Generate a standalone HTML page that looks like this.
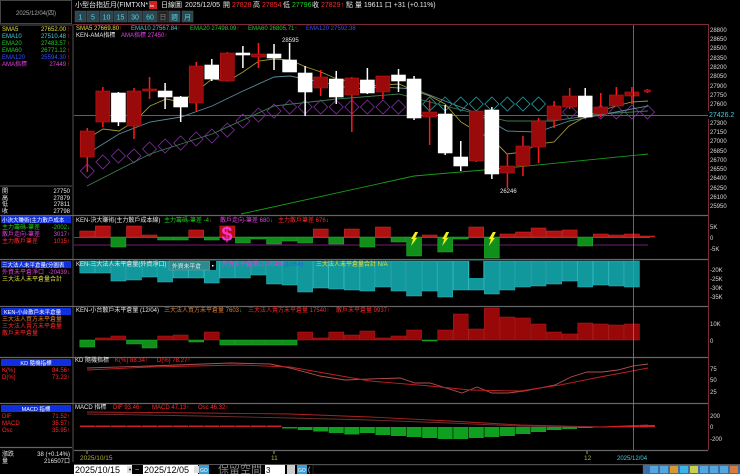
<!DOCTYPE html>
<html><head><meta charset="utf-8">
<style>
html,body{margin:0;padding:0;background:#000;width:740px;height:474px;overflow:hidden}
svg{display:block}
text{font-family:"Liberation Sans","Noto Sans CJK TC",sans-serif;font-size:6px}
.w{fill:#e8e8e8}.r{fill:#ff2a2a}.g{fill:#22cc22}.y{fill:#e0e040}.c{fill:#40d0e0}.m{fill:#e040e0}.b{fill:#3050ff}.ax{fill:#d8d8d8;font-size:6.5px}
.t{font-size:5.8px}
</style></head><body>
<svg id="s" width="740" height="474" viewBox="0 0 740 474" xmlns="http://www.w3.org/2000/svg">
<rect width="740" height="474" fill="#000"/>
<rect x="0.5" y="0.5" width="71" height="23" fill="none" stroke="#444"/>
<text x="36" y="15" text-anchor="middle" fill="#aaa" style="font-size:6px">2025/12/04(四)</text>
<text x="75" y="7" class="w" style="font-size:7px">小型台指近月(FIMTXN*1)</text>
<rect x="149" y="1" width="8" height="8" fill="#d02020"/><text x="150" y="7" fill="#fff" style="font-size:4px">tw</text>
<text x="161" y="7" class="w" style="font-size:7px">日線圖</text>
<text x="185" y="7" class="w" style="font-size:7px">2025/12/05</text>
<text x="223" y="7" class="w" style="font-size:7px">開</text><text x="232" y="7" class="r" style="font-size:7px">27828</text>
<text x="253" y="7" class="w" style="font-size:7px">高</text><text x="262" y="7" class="r" style="font-size:7px">27854</text>
<text x="283" y="7" class="w" style="font-size:7px">低</text><text x="292" y="7" class="g" style="font-size:7px">27796</text>
<text x="312" y="7" class="w" style="font-size:7px">收</text><text x="321" y="7" class="r" style="font-size:7px">27829↑</text>
<text x="346" y="7" class="w" style="font-size:7px">點 量 19611 口 +31 (+0.11%)</text>
<g id="btns"></g>
<line x1="0" y1="25" x2="72" y2="25" stroke="#555"/>
<g class="t">
<text x="2" y="31" class="y">SMA5</text><text x="66" y="31" class="y" text-anchor="end">27652.00</text>
<text x="2" y="38" class="c">EMA10</text><text x="66" y="38" class="c" text-anchor="end">27510.48</text>
<text x="2" y="45" class="g">EMA20</text><text x="66" y="45" class="g" text-anchor="end">27483.57</text>
<text x="2" y="52" class="g">EMA60</text><text x="66" y="52" class="g" text-anchor="end">26771.12</text>
<text x="2" y="59" class="b">EMA120</text><text x="66" y="59" class="b" text-anchor="end">25594.30</text>
<text x="2" y="66" class="m">AMA指標</text><text x="66" y="66" class="m" text-anchor="end">27449</text>
<text x="67" y="31" class="r">↑</text><text x="67" y="38" class="r">↑</text><text x="67" y="45" class="r">↑</text><text x="67" y="52" class="r">↑</text><text x="67" y="59" class="r">↑</text><text x="67" y="66" class="r">↑</text>
</g>
<line x1="0" y1="186" x2="72" y2="186" stroke="#555"/>
<g class="t">
<text x="2" y="193" class="w">開</text><text x="70" y="193" class="w" text-anchor="end">27750</text>
<text x="2" y="200" class="w">高</text><text x="70" y="200" class="w" text-anchor="end">27879</text>
<text x="2" y="206" class="w">低</text><text x="70" y="206" class="w" text-anchor="end">27811</text>
<text x="2" y="213" class="w">收</text><text x="70" y="213" class="w" text-anchor="end">27798</text>
<rect x="1" y="216" width="70" height="7" fill="#1030e0"/><text x="2" y="222" fill="#fff" style="font-size:5.5px">小決大賺術(主力散戶成本</text>
<text x="2" y="229" class="g">主力籌碼-筆差</text><text x="70" y="229" class="g" text-anchor="end">-2002↓</text>
<text x="2" y="236" class="m">散戶走向-筆差</text><text x="70" y="236" class="m" text-anchor="end">3017↑</text>
<text x="2" y="243" class="r">主力散戶筆差</text><text x="70" y="243" class="r" text-anchor="end">1015↑</text>
<rect x="1" y="261" width="70" height="7" fill="#1030e0"/><text x="2" y="267" fill="#fff" style="font-size:5.5px">三大法人未平倉量(分圖表</text>
<text x="2" y="274" class="m">外資未平倉淨口</text><text x="70" y="274" class="m" text-anchor="end">-20439↓</text>
<text x="2" y="281" class="y">三大法人未平倉量合計</text>
<rect x="1" y="308" width="70" height="7" fill="#1030e0"/><text x="4" y="314" fill="#fff" style="font-size:5.5px">KEN-小台散戶未平倉量</text>
<text x="2" y="321" style="fill:#e08030">三大法人買方未平倉量</text>
<text x="2" y="328" class="r">三大法人賣方未平倉量</text>
<text x="2" y="335" class="r">散戶未平倉量</text>
<rect x="1" y="359" width="70" height="7" fill="#1030e0"/><text x="36" y="365" fill="#fff" text-anchor="middle" style="font-size:5.5px">KD 隨機指標</text>
<text x="2" y="372" class="r">K(%)</text><text x="70" y="372" class="r" text-anchor="end">84.56↑</text>
<text x="2" y="379" class="r">D(%)</text><text x="70" y="379" class="r" text-anchor="end">73.23↑</text>
<rect x="1" y="405" width="70" height="7" fill="#1030e0"/><text x="36" y="411" fill="#fff" text-anchor="middle" style="font-size:5.5px">MACD 指標</text>
<text x="2" y="418" class="r">DIF</text><text x="70" y="418" class="r" text-anchor="end">71.52↑</text>
<text x="2" y="425" class="r">MACD</text><text x="70" y="425" class="r" text-anchor="end">35.57↑</text>
<text x="2" y="432" class="r">Osc</text><text x="70" y="432" class="r" text-anchor="end">35.95↑</text>
<text x="2" y="456" class="w">漲跌</text><text x="70" y="456" class="w" text-anchor="end">38 (+0.14%)</text>
<text x="2" y="463" class="w">量</text><text x="70" y="463" class="w" text-anchor="end">216507口</text>
</g>
<line x1="73" y1="24" x2="73" y2="462" stroke="#555"/>
<line x1="74" y1="24.5" x2="708" y2="24.5" stroke="#7a2a3a"/>
<line x1="708.5" y1="24" x2="708.5" y2="450" stroke="#7a2a3a"/>
<g stroke="#666" stroke-width="1.3">
<line x1="0" y1="215.5" x2="708" y2="215.5"/><line x1="0" y1="259.5" x2="708" y2="259.5"/>
<line x1="0" y1="306.5" x2="708" y2="306.5"/><line x1="0" y1="357.5" x2="708" y2="357.5"/>
<line x1="0" y1="403.5" x2="708" y2="403.5"/><line x1="74" y1="450.5" x2="708" y2="450.5"/>
<line x1="0" y1="447.5" x2="72" y2="447.5"/>
</g>
<g id="plot"></g>
<g class="t">
<text x="76" y="30" class="y">SMA5 27669.80<tspan class="r">↑</tspan></text>
<text x="131" y="30" class="c">EMA10 27567.84<tspan class="r">↑</tspan></text>
<text x="190" y="30" class="g">EMA20 27498.09<tspan class="r">↑</tspan></text>
<text x="248" y="30" class="g">EMA60 26805.71<tspan class="r">↑</tspan></text>
<text x="306" y="30" class="b">EMA120 27592.38</text>
<text x="76" y="37" class="w">KEN-AMA指標</text>
<text x="121" y="37" class="m">AMA指標 27450<tspan class="r">↑</tspan></text>
</g>
<text x="282" y="42" class="w">28595</text>
<text x="500" y="193" class="w">26246</text>
<g class="ax">
<text x="710" y="32">28800</text><text x="710" y="41">28650</text><text x="710" y="50">28500</text><text x="710" y="60">28350</text><text x="710" y="69">28200</text><text x="710" y="78">28050</text><text x="710" y="88">27900</text><text x="710" y="97">27750</text><text x="710" y="106">27600</text><text x="710" y="125">27300</text><text x="710" y="134">27150</text><text x="710" y="143">27000</text><text x="710" y="153">26850</text><text x="710" y="162">26700</text><text x="710" y="171">26550</text><text x="710" y="180">26400</text><text x="710" y="190">26250</text><text x="710" y="199">26100</text><text x="710" y="208">25950</text>
<text x="710" y="229">5K</text><text x="710" y="240">0</text><text x="710" y="251">-5K</text>
<text x="710" y="272">-20K</text><text x="710" y="281">-25K</text><text x="710" y="290">-30K</text><text x="710" y="299">-35K</text>
<text x="710" y="326">10K</text><text x="710" y="343">0</text>
<text x="710" y="371">75</text><text x="710" y="382">50</text><text x="710" y="394">25</text>
<text x="710" y="418">200</text><text x="710" y="429">0</text><text x="710" y="441">-200</text>
</g>
<rect x="708" y="111" width="32" height="8" fill="#000"/>
<text x="709" y="117" class="c" style="font-size:7px">27426.2</text>
<g class="t">
<text x="76" y="222" class="w">KEN-決大賺術(主力散戶成本線)</text>
<text x="164" y="222" class="g">主力籌碼-筆差 -4<tspan class="r">↓</tspan></text>
<text x="220" y="222" class="m">散戶走向-筆差 680<tspan class="g">↓</tspan></text>
<text x="278" y="222" class="r">主力散戶筆差 676<tspan class="g">↓</tspan></text>
<text x="76" y="266" class="w">KEN-三大法人未平倉量(外資淨口)</text>
</g>
<rect x="169" y="261" width="41" height="9" fill="#2a8c90" stroke="#999" stroke-width="0.5"/>
<text x="172" y="268" class="w t">外資未平倉</text>
<rect x="210" y="261" width="6" height="9" fill="#000"/><rect x="212" y="265" width="1.5" height="1.5" fill="#fff"/>
<g class="t">
<text x="222" y="266" class="m">外資未平倉淨口 -20439</text>
<text x="284" y="266" class="b">(17/54)</text>
<text x="316" y="266" class="y">三大法人未平倉量合計 N/A</text>
<text x="76" y="312" class="w">KEN-小台散戶未平倉量 (12/04)</text>
<text x="164" y="312" style="fill:#e08030">三大法人買方未平倉量 7603<tspan class="g">↓</tspan></text>
<text x="248" y="312" class="r">三大法人賣方未平倉量 17540<tspan class="r">↑</tspan></text>
<text x="336" y="312" class="r">散戶未平倉量 9937↑</text>
<text x="75" y="362" class="w">KD 隨機指標</text>
<text x="115" y="362" class="r">K(%) 88.34↑</text><text x="157" y="362" class="r">D(%) 78.27↑</text>
<text x="75" y="409" class="w">MACD 指標</text>
<text x="113" y="409" class="r">DIF 93.46↑</text><text x="152" y="409" class="r">MACD 47.13↑</text><text x="198" y="409" class="r">Osc 46.32↑</text>
</g>
<g stroke="#a0a040"><line x1="87" y1="451" x2="87" y2="454"/><line x1="274" y1="451" x2="274" y2="454"/><line x1="587" y1="451" x2="587" y2="454"/></g>
<text x="80" y="460" style="fill:#b0b040;font-size:6.5px">2025/10/15</text>
<text x="271" y="460" style="fill:#b0b040;font-size:6.5px">11</text>
<text x="584" y="460" style="fill:#b0b040;font-size:6.5px">12</text>
<text x="617" y="460" class="c">2025/12/04</text>
<line x1="74" y1="464.5" x2="740" y2="464.5" stroke="#555"/>
<rect x="74" y="465" width="58" height="9" fill="#fff"/><text x="75" y="473" fill="#000" style="font-size:9px">2025/10/15</text>
<rect x="127" y="466" width="5" height="7" fill="#ddd"/><text x="128" y="471" fill="#000" style="font-size:4px">▼</text>
<text x="135" y="472" fill="#ccc" style="font-size:7px">~</text>
<rect x="143" y="465" width="55" height="9" fill="#fff"/><text x="144" y="473" fill="#000" style="font-size:9px">2025/12/05</text>
<rect x="194" y="466" width="5" height="7" fill="#ddd"/>
<rect x="199" y="465" width="10" height="9" fill="#3aa0d8"/><text x="200" y="472" fill="#fff" style="font-size:5px">GO</text>
<text x="218" y="473" fill="#888" style="font-size:11px">保留空間</text>
<rect x="265" y="465" width="20" height="9" fill="#fff"/><text x="266" y="473" fill="#000" style="font-size:8px">3</text>
<rect x="287" y="465" width="8" height="9" fill="#ccc"/>
<rect x="297" y="465" width="10" height="9" fill="#3aa0d8"/><text x="298" y="472" fill="#fff" style="font-size:5px">GO</text>
<text x="308" y="472" fill="#ccc" style="font-size:7px">(</text>
<rect x="313" y="465" width="330" height="9" fill="#000" stroke="#444" stroke-width="0.5"/>
<rect x="643" y="465" width="97" height="9" fill="#3a6fa8"/>
<g id="tools"></g>
</svg>
<script>
var P=document.getElementById('plot'),NS='http://www.w3.org/2000/svg';
function el(t,a,par){var e=document.createElementNS(NS,t);for(var k in a)e.setAttribute(k,a[k]);(par||P).appendChild(e);return e;}
function X(i){return 87.3+15.56*(i-1);}
var B=document.getElementById('btns');
[[75,11,'1'],[87,12,'5'],[100,13,'10'],[114,13,'15'],[128,14,'30'],[143,14,'60'],[158,10,'日'],[169,11,'週'],[182,11,'月']].forEach(function(b){
 el('rect',{x:b[0],y:11,width:b[1],height:11,fill:b[2]=='日'?'#222':'#2a4650',stroke:'#555','stroke-width':0.5},B);
 var t=el('text',{x:b[0]+b[1]/2,y:19.5,'text-anchor':'middle',fill:b[2]=='日'?'#888':'#5ad0e0',style:'font-size:7px'},B);t.textContent=b[2];});
var T=document.getElementById('tools');
var tc=['#5ab0e8','#5ab0e8','#f0a020','#40c0f0','#e0e040','#5ab0e8','#5ab0e8','#5ab0e8','#f08030'];
tc.forEach(function(c,i){el('rect',{x:650+i*10,y:466,width:8,height:7,fill:c,opacity:0.85},T);});
var p2=[[231,'r'],[226,'r'],[247,'g'],[226,'r'],[235,'r'],[240,'g'],[240,'g'],[230,'r'],[240,'g'],[226,'r'],[243,'g'],[239,'g'],[244,'g'],[241,'g'],[243,'g'],[229,'r'],[244,'g'],[229,'r'],[247,'g'],[227,'r'],[242,'g'],[256,'g'],[235,'r'],[252,'g'],[239,'g'],[227,'r'],[258,'g'],[234,'r'],[232,'r'],[228,'r'],[231,'r'],[230,'r'],[246,'g'],[234,'r'],[235,'r'],[234,'r'],[236,'r']];
el('line',{x1:74,y1:245,x2:648,y2:245,stroke:'#a020a0','stroke-width':0.8});
el('line',{x1:74,y1:237.5,x2:650,y2:237.5,stroke:'#707030','stroke-width':0.8});
p2.forEach(function(v,i){var x=X(i+1),z=237;var y0=Math.min(v[0],z),h=Math.abs(v[0]-z)||1;
 el('rect',{x:x-7.5,y:y0,width:15,height:h,fill:v[1]=='r'?'#b01010':'#10901a',stroke:v[1]=='r'?'#d03030':'#20b030','stroke-width':0.5});});
[22,24,27].forEach(function(i){var x=X(i);el('path',{d:'M'+(x+1)+' 232 L'+(x+4)+' 232 L'+(x+1)+' 238 L'+(x+3)+' 238 L'+(x-3)+' 246 L'+(x-1)+' 239 L'+(x-3)+' 239 Z',fill:'#f0f020'});});
var sd=el('text',{x:X(10)-6,y:241,fill:'#ff30d0',style:'font-size:20px;font-weight:bold'});sd.textContent='$';
var p3=[273,273,281,280,277,282,278,278,283,278,278,275,284,285,292,288,289,290,291,287,291,296,291,297,290,290,294,290,287,286,284,281,287,285,286,287];
p3.forEach(function(b,i){var x=X(i+1);el('rect',{x:x-7.5,y:261,width:15,height:b-261,fill:'#10989c',stroke:'#30c0c8','stroke-width':0.5});});
el('rect',{x:X(26)-7,y:261,width:14,height:17,fill:'#000'});
var p4=[[347,'g'],[338,'r'],[336,'r'],[344,'g'],[348,'g'],[336,'r'],[335,'r'],[342,'g'],[332,'r'],[345,'g'],[345,'g'],[345,'g'],[345,'g'],[345,'g'],[332,'r'],[338,'r'],[332,'r'],[335,'r'],[331,'r'],[338,'r'],[336,'r'],[330,'r'],[341,'g'],[330,'r'],[314,'r'],[329,'r'],[308,'r'],[317,'r'],[318,'r'],[324,'r'],[332,'r'],[334,'r'],[323,'r'],[324,'r'],[325,'r'],[324,'r']];
p4.forEach(function(v,i){var x=X(i+1),z=340;var y0=Math.min(v[0],z),h=Math.abs(v[0]-z)||1;
 el('rect',{x:x-7.5,y:y0,width:15,height:h,fill:v[1]=='r'?'#980808':'#10901a',stroke:v[1]=='r'?'#b02020':'#20b030','stroke-width':0.5});});
function pl(pts,c,w){el('polyline',{points:pts,fill:'none',stroke:c,'stroke-width':w||0.9});}
pl('87,368 150,366 230,363 270,364 290,368 320,376 345,380 370,379 400,378 415,383 430,383 462,393 477,387 492,393 508,393 524,391 540,388 555,385 571,377 587,372 602,372 618,370 633,366 648,364','#b05050');
pl('87,370 150,367 240,365 290,367 330,374 370,381 430,386 470,390 520,391 560,385 600,377 648,368','#c02020');
pl('87,412 200,413 290,414 370,417 450,421 520,425 600,427 648,425','#b02020');
pl('87,414 200,416 290,418 370,420 450,423 520,426 600,427 648,427','#703030');
for(var i=1;i<=37;i++){var x=X(i),v;
 if(i<=13)v=-1.5;else if(i<=18)v=(i-13)*1.5;else if(i<=28)v=[6,8,9,10,11,12,12,11,10,9][i-19];else if(i<=33)v=[7,5,3,2,1][i-29];else v=-[0.5,1,1.5,2][i-34];
 var y0=v>0?427:427+v,h=Math.max(Math.abs(v),1);
 el('rect',{x:x-7.5,y:y0,width:15,height:h,fill:v>0?'#10a020':'#d02020'});}
el('line',{x1:74,y1:115.5,x2:708,y2:115.5,stroke:'#30a0b0','stroke-width':0.8});
var dy=[171,162,156,156,149,146,143,139,136,130,121,115,111,107,107,107,107,107,107,107,107,104,104,104,104,104,104,104,104,104,112,112,112,112,112,112,112];
dy.forEach(function(y,i){var x=X(i+1),c=(i>=21&&i<=29)?'#20a0a8':'#8030a0';
 el('path',{d:'M'+x+' '+(y-7)+' L'+(x+7)+' '+y+' L'+x+' '+(y+7)+' L'+(x-7)+' '+y+' Z',fill:'none',stroke:c,'stroke-width':0.8});});
pl('241,214 414,176 507,168 648,154','#1a9a1a');
pl('87,186 150,154 212,134 274,106 337,99 399,94 445,106 507,121 553,121 600,114 648,111','#3c7a50');
pl('87,154 119,134 150,122 181,117 212,106 243,91 274,77 290,76 321,82 353,89 384,87 414,89 445,101 476,113 507,131 538,132 569,121 600,115 632,109 648,106','#5a8a9a');
pl('87,139 103,129 119,131 135,121 150,106 166,99 181,102 197,91 212,79 228,81 243,72 259,61 274,59 290,60 306,67 321,72 337,79 353,82 368,86 384,85 399,84 415,91 430,96 445,104 461,122 476,131 492,139 507,154 523,152 538,144 554,142 569,126 585,117 600,111 616,106 632,102 648,101','#a09830');
var C=[[131,157,128,172,'r'],[91,122,87,127,'r'],[93,122,92,126,'w'],[91,126,88,139,'r'],[89,91,77,99,'r'],[91,97,83,109,'w'],[97,107,96,122,'w'],[66,103,62,111,'r'],[65,79,59,81,'w'],[53,81,52,81,'r'],[53,55,46,68,'w'],[54,57,43,68,'r'],[54,58,44,70,'w'],[60,72,43,72,'w'],[73,92,66,116,'w'],[77,88,70,96,'r'],[79,97,71,104,'w'],[78,95,77,132,'r'],[80,93,68,94,'w'],[76,92,76,99,'r'],[75,81,69,92,'w'],[79,118,76,120,'w'],[112,117,100,145,'r'],[114,153,105,155,'w'],[157,166,141,171,'w'],[111,161,111,162,'r'],[110,174,107,179,'w'],[166,173,154,188,'r'],[146,166,136,176,'r'],[121,147,118,163,'r'],[106,120,101,128,'r'],[96,107,88,109,'r'],[96,117,88,118,'w'],[107,114,93,117,'r'],[95,106,87,106,'r'],[92,96,87,104,'r'],[90,92,89,93,'r']];
C.forEach(function(c,i){var x=X(i+1),red=c[4]=='r';
 el('line',{x1:x,y1:c[2],x2:x,y2:c[3],stroke:red?'#ff1a1a':'#fff','stroke-width':1.5});
 var w=i==36?6:14;
 el('rect',{x:x-w/2,y:c[0],width:w,height:Math.max(c[1]-c[0],1.5),fill:red?'#9a0a0a':'#fff',stroke:red?'#c01818':'#fff','stroke-width':0.6});});
el('line',{x1:633.5,y1:25,x2:633.5,y2:450,stroke:'#30a0b0','stroke-width':0.8});
</script>
</body></html>
